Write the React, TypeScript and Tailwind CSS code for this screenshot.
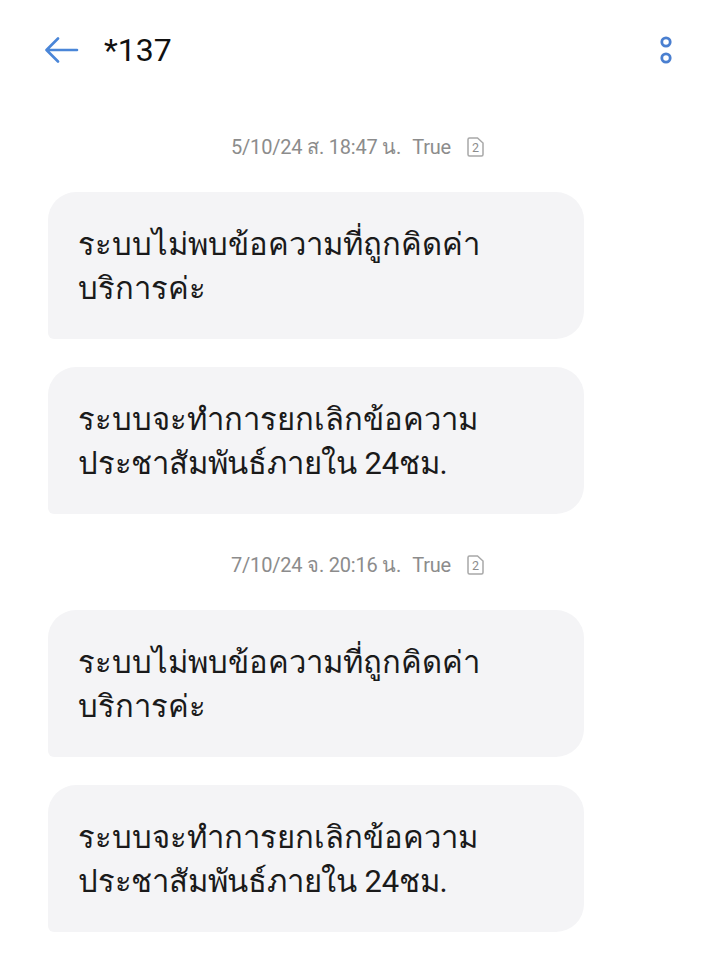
const font = { fontFamily: '"Roboto", "Noto Sans", "DejaVu Sans", sans-serif' };

function Meta({ date }: { date: string }) {
  return (
    <div className="flex items-center justify-center h-[24px] text-[20px] text-[#8c8c8c] tracking-[-0.2px] pr-[4px]">
      <span>{date}</span>
      <span className="ml-[11px]">True</span>
      <svg width="17" height="20" viewBox="0 0 17 20" fill="none" className="ml-[16px]">
        <path d="M2.500 1h8l5.500 5v11.500a1.500 1.500 0 0 1-1.500 1.500h-12a1.500 1.500 0 0 1-1.500-1.500v-15a1.500 1.500 0 0 1 1.500-1.500z" stroke="#a8a8a8" strokeWidth="1.500" />
        <text x="8.500" y="15" fontSize="12.500" textAnchor="middle" fill="#8c8c8c">2</text>
      </svg>
    </div>
  );
}

function BubbleA() {
  return (
    <div className="w-[536px] h-[147px] bg-[#f4f4f6] rounded-[28px] rounded-bl-[6px] px-[30px] pt-[31px] text-[31px] leading-[44px] text-[#1a1a1a]">
      <div className="whitespace-nowrap">ระบบไม่พบข้อความที่ถูกคิดค่า</div>
      <div className="whitespace-nowrap">บริการค่ะ</div>
    </div>
  );
}

function BubbleB() {
  return (
    <div className="w-[536px] h-[147px] bg-[#f4f4f6] rounded-[28px] rounded-bl-[6px] px-[30px] pt-[31px] text-[31px] leading-[44px] text-[#1a1a1a]">
      <div className="whitespace-nowrap">ระบบจะทำการยกเลิกข้อความ</div>
      <div className="whitespace-nowrap tracking-[-0.2px]">ประชาสัมพันธ์ภายใน 24ชม.</div>
    </div>
  );
}

export default function App() {
  return (
    <div className="w-[719px] h-[959px] bg-white overflow-hidden" style={font}>
      <header className="flex items-center h-[100px] pl-[45px] pr-[46px]">
        <svg width="34" height="28" viewBox="0 0 34 28" fill="none" stroke="#4a86d8" strokeWidth="2.600" strokeLinecap="round" strokeLinejoin="round">
          <path d="M32 14H2M13 2.500 1.500 14 13 25.500" />
        </svg>
        <span className="ml-[25px] text-[32px] text-[#111111]">*137</span>
        <svg width="14" height="32" viewBox="0 0 14 32" fill="none" stroke="#4a7fd0" strokeWidth="2.800" className="ml-auto">
          <circle cx="7" cy="8" r="4.200" />
          <circle cx="7" cy="24" r="4.200" />
        </svg>
      </header>
      <main>
        <div className="pt-[35px]"><Meta date="5/10/24 ส. 18:47 น." /></div>
        <div className="mt-[33px] ml-[48px] flex flex-col gap-[28px]">
          <BubbleA />
          <BubbleB />
        </div>
        <div className="mt-[39px]"><Meta date="7/10/24 จ. 20:16 น." /></div>
        <div className="mt-[33px] ml-[48px] flex flex-col gap-[28px]">
          <BubbleA />
          <BubbleB />
        </div>
      </main>
    </div>
  );
}
